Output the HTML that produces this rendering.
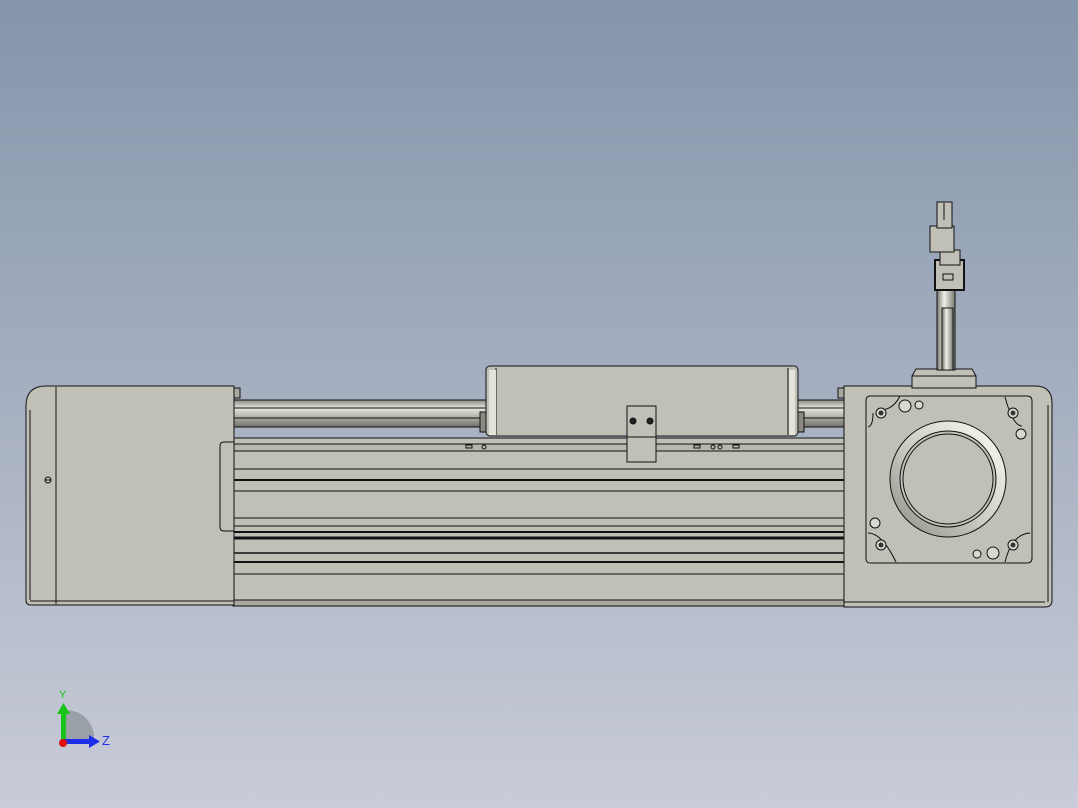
<!DOCTYPE html>
<html><head><style>
html,body{margin:0;padding:0;width:1078px;height:808px;overflow:hidden}
body{background:linear-gradient(to bottom,#8595ab 0%,#a3adbf 45%,#c9ccd8 100%)}
svg{position:absolute;left:0;top:0}
</style></head><body>
<svg width="1078" height="808" viewBox="0 0 1078 808">
<defs>
<linearGradient id="rod" x1="0" y1="0" x2="0" y2="1">
<stop offset="0" stop-color="#8a8a82"/><stop offset="0.3" stop-color="#e8e8e0"/><stop offset="0.6" stop-color="#b5b5ac"/><stop offset="1" stop-color="#707068"/></linearGradient>
<linearGradient id="vrod" x1="0" y1="0" x2="1" y2="0">
<stop offset="0" stop-color="#77776f"/><stop offset="0.4" stop-color="#f0f0e8"/><stop offset="1" stop-color="#7a7a72"/></linearGradient>
<linearGradient id="ring" x1="0" y1="1" x2="1" y2="0"><stop offset="0" stop-color="#8e8e86"/><stop offset="0.5" stop-color="#d0d0c8"/><stop offset="0.85" stop-color="#f0f0e8"/><stop offset="1" stop-color="#a0a098"/></linearGradient>
</defs>
<g stroke="#111" stroke-width="1" fill="#c1c0b6">
<rect x="233" y="400" width="612" height="27" fill="url(#rod)"/>
<line x1="233" y1="408" x2="845" y2="408"/>
<line x1="233" y1="418" x2="845" y2="418"/>
<rect x="233" y="438" width="612" height="168"/>
<rect x="233" y="444" width="612" height="7" fill="#b8b7ad"/>
<line x1="233" y1="469" x2="845" y2="469"/>
<line x1="233" y1="480" x2="845" y2="480" stroke-width="2"/>
<line x1="233" y1="491" x2="845" y2="491"/>
<line x1="233" y1="518" x2="845" y2="518"/>
<line x1="233" y1="526" x2="845" y2="526"/>
<line x1="233" y1="532" x2="845" y2="532" stroke-width="2"/>
<line x1="233" y1="538" x2="845" y2="538" stroke-width="3"/>
<line x1="233" y1="553" x2="845" y2="553" stroke-width="1.5"/>
<line x1="233" y1="562" x2="845" y2="562" stroke-width="2"/>
<line x1="233" y1="574" x2="845" y2="574"/>
<rect x="233" y="600" width="612" height="6" fill="#a9a89f"/>
<path d="M234 386 H46 Q26 386 26 406 V600 Q26 605 31 605 H234 Z"/>
<line x1="56" y1="387" x2="56" y2="604"/>
<line x1="30" y1="410" x2="30" y2="600"/>
<line x1="30" y1="601" x2="234" y2="601"/>
<circle cx="48" cy="480" r="3" fill="none"/><line x1="45" y1="480" x2="51" y2="480"/>
<path d="M234 442 H224 Q220 442 220 446 V527 Q220 531 224 531 H234" fill="none"/>
<rect x="234" y="388" width="6" height="10" fill="#a9a89f"/>
<rect x="486" y="366" width="312" height="70" rx="4"/>
<line x1="496" y1="368" x2="496" y2="435"/>
<line x1="788" y1="368" x2="788" y2="435"/>
<rect x="489" y="370" width="7" height="65" fill="#e4e4dc" stroke="none"/>
<rect x="789" y="370" width="6" height="65" fill="#e4e4dc" stroke="none"/>
<rect x="480" y="412" width="6" height="20" fill="#8a8a82"/>
<rect x="798" y="412" width="6" height="20" fill="#8a8a82"/>
<rect x="627" y="406" width="29" height="56"/>
<line x1="627" y1="437" x2="656" y2="437"/>
<circle cx="633" cy="421" r="3" fill="#222"/><circle cx="650" cy="421" r="3" fill="#222"/>
<rect x="694" y="445" width="6" height="3" fill="none"/>
<rect x="733" y="445" width="6" height="3" fill="none"/>
<circle cx="713" cy="447" r="2" fill="none"/><circle cx="720" cy="447" r="2" fill="none"/>
<rect x="466" y="445" width="6" height="3" fill="none"/>
<circle cx="484" cy="447" r="2" fill="none"/>
<path d="M844 386 H1035 Q1052 386 1052 403 V600 Q1052 607 1045 607 H844 Z"/>
<line x1="1048" y1="405" x2="1048" y2="602"/>
<line x1="844" y1="602" x2="1045" y2="602"/>
<rect x="838" y="388" width="6" height="10" fill="#a9a89f"/>
<path d="M870 396 H1027 Q1032 396 1032 401 V558 Q1032 563 1027 563 H870 Q866 563 866 558 V401 Q866 396 870 396 Z" fill="none"/>
<path d="M873 413 Q873 426 868 427 M1022 426 Q1013 426 1005 397 M900 396 Q893 410 880 410 M868 533 Q882 533 896 562 M1005 562 Q1012 534 1030 533" fill="none"/>
<circle cx="948" cy="479" r="58" fill="url(#ring)"/>
<circle cx="948" cy="479" r="48"/>
<circle cx="948" cy="479" r="45" fill="none"/>
<g fill="#d8d8d0">
<circle cx="881" cy="413" r="5"/><circle cx="1013" cy="413" r="5"/><circle cx="881" cy="545" r="5"/><circle cx="1013" cy="545" r="5"/>
<circle cx="905" cy="406" r="6"/><circle cx="919" cy="405" r="4"/>
<circle cx="1021" cy="434" r="5"/><circle cx="875" cy="523" r="5"/>
<circle cx="993" cy="553" r="6"/><circle cx="977" cy="554" r="4"/>
</g>
<g fill="#333" stroke="none">
<circle cx="881" cy="413" r="2.5"/><circle cx="1013" cy="413" r="2.5"/><circle cx="881" cy="545" r="2.5"/><circle cx="1013" cy="545" r="2.5"/>
</g>
<path d="M912 388 V376 L916 369 H972 L976 376 V388 Z"/>
<line x1="912" y1="376" x2="976" y2="376"/>
<rect x="937" y="290" width="18" height="80" fill="url(#vrod)"/>
<rect x="942" y="308" width="11" height="62" fill="url(#vrod)"/>
<rect x="935" y="260" width="29" height="30" fill="#c1c0b6" stroke-width="2"/>
<rect x="940" y="250" width="20" height="15"/>
<rect x="930" y="226" width="24" height="26"/>
<rect x="937" y="202" width="15" height="26"/>
<line x1="944" y1="203" x2="944" y2="220"/>
<rect x="943" y="274" width="10" height="6" fill="none"/>
</g>
<path d="M66 710 A28 28 0 0 1 94 740 H66 Z" fill="#9aa0a8"/>
<rect x="61" y="713" width="5" height="27" fill="#19c419"/>
<polygon points="57,714 63.5,703 70,714" fill="#19c419"/>
<rect x="62" y="739" width="28" height="5" fill="#1c2ee8"/>
<polygon points="89,735 100,741.5 89,748" fill="#1c2ee8"/>
<circle cx="63" cy="743" r="4" fill="#e01010"/>
<text x="59" y="698" font-family="Liberation Sans, sans-serif" font-size="11" fill="#19c419">Y</text>
<text x="102" y="745" font-family="Liberation Sans, sans-serif" font-size="13" fill="#1c2ee8">Z</text>
</svg>
</body></html>
